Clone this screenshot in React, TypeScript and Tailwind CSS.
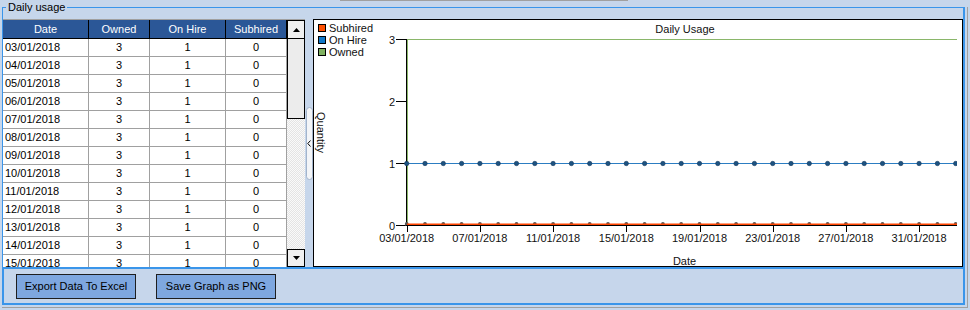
import React from "react";

const rows = [
  "03/01/2018","04/01/2018","05/01/2018","06/01/2018","07/01/2018","08/01/2018","09/01/2018",
  "10/01/2018","11/01/2018","12/01/2018","13/01/2018","14/01/2018","15/01/2018",
];

const X0 = 406.7;
const DX = 18.3;
const pts = Array.from({ length: 31 }, (_, i) => X0 + i * DX);
const xLabels = ["03/01/2018","07/01/2018","11/01/2018","15/01/2018","19/01/2018","23/01/2018","27/01/2018","31/01/2018"];
const yTicks = [
  { v: "3", y: 39.5 },
  { v: "2", y: 101.5 },
  { v: "1", y: 163.5 },
  { v: "0", y: 225 },
];

function Chart() {
  return (
    <svg width={648} height={246} viewBox="314 20 648 246" fontSize={11} fill="#111">
      <defs>
        <clipPath id="plotclip">
          <rect x={404} y={30} width={553} height={200} />
        </clipPath>
      </defs>
      <rect x={318.5} y={24.5} width={7} height={7} fill="#ff5000" stroke="#000" />
      <rect x={318.5} y={36.5} width={7} height={7} fill="#1078c8" stroke="#000" />
      <rect x={318.5} y={48.5} width={7} height={7} fill="#80b262" stroke="#000" />
      <text x={329} y={32}>Subhired</text>
      <text x={329} y={44}>On Hire</text>
      <text x={329} y={56}>Owned</text>
      <text x={685} y={33} textAnchor="middle">Daily Usage</text>
      {yTicks.map((t) => (
        <g key={t.v}>
          <line x1={396} x2={406} y1={Math.floor(t.y) + 0.5} y2={Math.floor(t.y) + 0.5} stroke="#000" />
          <text x={395} y={Math.floor(t.y) + 4.5} textAnchor="end">{t.v}</text>
        </g>
      ))}
      <line x1={406.5} x2={406.5} y1={39} y2={226} stroke="#000" />
      <line x1={407.5} x2={407.5} y1={39} y2={225} stroke="#8ab66a" />
      <line x1={407} x2={957} y1={39.5} y2={39.5} stroke="#8ab66a" />
      <g clipPath="url(#plotclip)">
        <line x1={407} x2={957} y1={163.5} y2={163.5} stroke="#2c7dc2" strokeWidth={1.2} />
        {pts.map((x, i) => (
          <circle key={"b" + i} cx={x} cy={163.5} r={2.2} fill="#1d5382" stroke="#14385a" strokeWidth={0.6} />
        ))}
        {pts.map((x, i) => (
          <circle key={"o" + i} cx={x} cy={224} r={1.9} fill="#555" />
        ))}
        <line x1={407} x2={957} y1={224.5} y2={224.5} stroke="#ff4500" strokeWidth={2} />
      </g>
      <line x1={406} x2={957} y1={225.5} y2={225.5} stroke="#000" />
      {xLabels.map((l, k) => {
        const x = Math.round(pts[k * 4]) + 0.5;
        return (
          <g key={l}>
            <line x1={x} x2={x} y1={226} y2={232} stroke="#000" />
            <text x={pts[k * 4]} y={242} textAnchor="middle">{l}</text>
          </g>
        );
      })}
      <text x={684.5} y={265} textAnchor="middle">Date</text>
      <text x={316.5} y={132.5} textAnchor="middle" transform="rotate(90 316.5 132.5)">Quantity</text>
    </svg>
  );
}

function Cell({ w, children, left, header }: { w: string; children: React.ReactNode; left?: boolean; header?: boolean }) {
  return (
    <div
      className={
        "flex h-full shrink-0 items-center border-r " +
        (header ? "border-black " : "border-[#a0a0a0] ") +
        (left ? "justify-start pl-[2px] " : "justify-center ") +
        w
      }
    >
      {children}
    </div>
  );
}

function Grid() {
  return (
    <div className="flex h-[248px] w-[302px] shrink-0 flex-col border-t border-[#a0a0a0] bg-white">
      <div className="flex min-h-0 flex-1">
        <div className="flex w-[284px] flex-col overflow-hidden">
          <div className="flex h-[19px] shrink-0 border-b border-black bg-[#2b5797] text-white">
            <Cell w="w-[86px]" header>Date</Cell>
            <Cell w="w-[61px]" header>Owned</Cell>
            <Cell w="w-[76px]" header>On Hire</Cell>
            <Cell w="w-[61px]" header>Subhired</Cell>
          </div>
          {rows.map((d) => (
            <div key={d} className="flex h-[18px] shrink-0 border-b border-[#a0a0a0] text-black">
              <Cell w="w-[86px]" left>{d}</Cell>
              <Cell w="w-[61px]">3</Cell>
              <Cell w="w-[76px]">1</Cell>
              <Cell w="w-[61px]">0</Cell>
            </div>
          ))}
        </div>
        <div className="flex w-[18px] shrink-0 flex-col">
          <div className="flex h-[19px] shrink-0 items-center justify-center border border-black bg-[#f0f0f0]">
            <svg width="7" height="4" viewBox="0 0 7 4"><polygon points="0,4 7,4 3.5,0" fill="#000" /></svg>
          </div>
          <div className="h-[80px] shrink-0 border-x border-b border-black bg-[#ececec]" />
          <div className="flex-1 bg-[repeating-conic-gradient(#e4e4e4_0_25%,#fafafa_0_50%)] bg-[length:2px_2px]" />
          <div className="flex h-[18px] shrink-0 items-center justify-center border border-black bg-[#f0f0f0]">
            <svg width="7" height="4" viewBox="0 0 7 4"><polygon points="0,0 7,0 3.5,4" fill="#000" /></svg>
          </div>
        </div>
      </div>
    </div>
  );
}

export default function App() {
  return (
    <div className="h-[310px] w-[970px] overflow-hidden bg-[#c6d6eb] font-['Liberation_Sans',Arial,sans-serif] text-[11px] leading-[13px] text-black">
      <div className="ml-[340px] h-[1px] w-[288px] bg-[#a0a0a0]" />
      <div className="ml-[2px] mt-[6px] w-[966px] border-b border-r border-[#a0a0a0] pb-[2px] pr-[2px]">
        <div className="relative h-[298px] w-[963px] border-b-2 border-l border-r-2 border-t border-[#3a95ea] pt-[11px]">
          <span className="absolute left-[3px] top-[-7px] bg-[#c6d6eb] px-[2px] leading-[13px]">Daily usage</span>
          <div className="flex h-[248px]">
            <Grid />
            <div className="flex w-[8px] shrink-0 items-center justify-center">
              <div className="flex h-[73px] w-[7px] items-center justify-center rounded-full border border-[#a3b4cb] bg-[#f3f5f8]">
                <svg width="4" height="7" viewBox="0 0 4 7"><polyline points="3.5,0.5 0.8,3.5 3.5,6.5" fill="none" stroke="#000" strokeWidth="1" /></svg>
              </div>
            </div>
            <div className="h-[248px] w-[650px] shrink-0 border border-black bg-white">
              <Chart />
            </div>
          </div>
          <div className="flex h-[36px] gap-[20px] border-l border-t-2 border-[#3a95ea] pl-[12px] pt-[5px]">
            <button className="flex h-[25px] w-[120px] items-center justify-center border border-[#1e1e1e] bg-[#7ea7df] text-[11px] text-black">
              Export Data To Excel
            </button>
            <button className="flex h-[25px] w-[120px] items-center justify-center border border-[#1e1e1e] bg-[#7ea7df] text-[11px] text-black">
              Save Graph as PNG
            </button>
          </div>
        </div>
      </div>
    </div>
  );
}
